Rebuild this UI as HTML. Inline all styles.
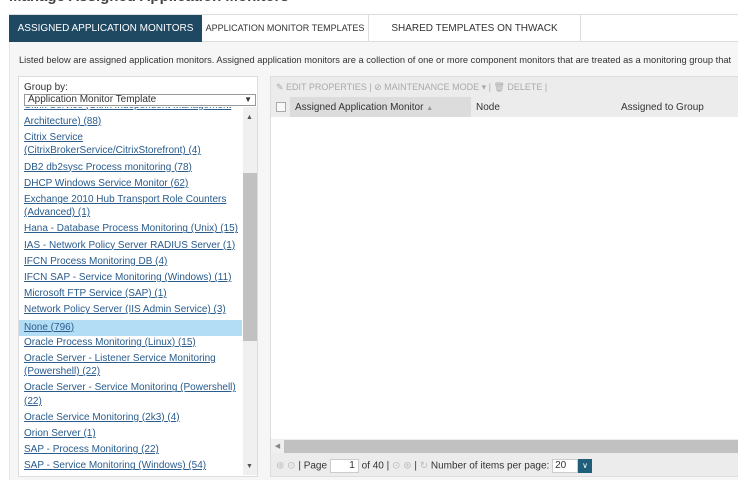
<!DOCTYPE html>
<html><head><style>
*{margin:0;padding:0;box-sizing:border-box}
body{width:738px;height:487px;overflow:hidden;background:#fff;font-family:"Liberation Sans",sans-serif;position:relative;color:#333}
.a{position:absolute}
.title{left:9px;top:-12px;font-size:15px;font-weight:bold;color:#444}
.tabs{left:9px;top:14px;width:729px;height:28px;border-top:1px solid #ddd;border-bottom:1px solid #ddd;background:#fff}
.tab{position:absolute;top:0;height:27px;line-height:27px;font-size:10px;color:#333;text-align:center;white-space:nowrap}
.content{left:9px;top:42px;width:729px;height:438px;background:#f6f6f6;border-left:1px solid #e6e6e6}
.list{left:18px;top:76px;width:240px;height:401px;background:#fff;border:1px solid #ddd}
.item{font-size:10px;line-height:13.2px;padding:0 0 3px 5px;color:#2a5c8c;white-space:nowrap}
.item span{text-decoration:underline}
.grid{left:270px;top:76px;width:468px;height:401px;background:#ececec;border:1px solid #ddd;border-right:none}
.tb{font-size:9px;color:#aaa}
</style></head><body>
<div class="a title">Manage Assigned Application Monitors</div>
<div class="a tabs">
<div class="tab" style="left:0;width:193px;background:#1f4862;color:#fff">ASSIGNED APPLICATION MONITORS</div>
<div class="tab" style="left:193px;width:167px;border-right:1px solid #ddd;font-size:9px">APPLICATION MONITOR TEMPLATES</div>
<div class="tab" style="left:360px;width:212px;border-right:1px solid #ddd">SHARED TEMPLATES ON THWACK</div>
</div>
<div class="a content"></div>
<div class="a" style="left:19px;top:55px;font-size:9.3px;white-space:nowrap;color:#333">Listed below are assigned application monitors. Assigned application monitors are a collection of one or more component monitors that are treated as a monitoring group that</div>
<div class="a list">
<div class="a" style="left:5px;top:5px;font-size:10px">Group by:</div>
<div class="a" style="left:5px;top:17px;width:232px;height:12px;border:1px solid #999;font-size:10px;line-height:10px;padding-left:3px;background:#fff">Application Monitor Template<span style="position:absolute;right:3px;font-size:8px">▼</span></div>
<div class="a" style="left:0;top:30px;width:223px;height:368px;overflow:hidden">
<div style="margin-top:-8px">
<div class="item"><span>Citrix Service (Citrix Independent Management</span></div>
</div>
<div style="position:absolute;top:8px;left:0;width:223px">
<div class="item"><span>Architecture) (88)</span></div>
<div class="item"><span>Citrix Service<br>(CitrixBrokerService/CitrixStorefront) (4)</span></div>
<div class="item"><span>DB2 db2sysc Process monitoring (78)</span></div>
<div class="item"><span>DHCP Windows Service Monitor (62)</span></div>
<div class="item"><span>Exchange 2010 Hub Transport Role Counters<br>(Advanced) (1)</span></div>
<div class="item"><span>Hana - Database Process Monitoring (Unix) (15)</span></div>
<div class="item"><span>IAS - Network Policy Server RADIUS Server (1)</span></div>
<div class="item"><span>IFCN Process Monitoring DB (4)</span></div>
<div class="item"><span>IFCN SAP - Service Monitoring (Windows) (11)</span></div>
<div class="item"><span>Microsoft FTP Service (SAP) (1)</span></div>
<div class="item"><span>Network Policy Server (IIS Admin Service) (3)</span></div>
<div class="item" style="background:#b3dcf5;padding-top:1px;padding-bottom:2px"><span>None (796)</span></div>
<div class="item"><span>Oracle Process Monitoring (Linux) (15)</span></div>
<div class="item"><span>Oracle Server - Listener Service Monitoring<br>(Powershell) (22)</span></div>
<div class="item"><span>Oracle Server - Service Monitoring (Powershell)<br>(22)</span></div>
<div class="item"><span>Oracle Service Monitoring (2k3) (4)</span></div>
<div class="item"><span>Orion Server (1)</span></div>
<div class="item"><span>SAP - Process Monitoring (22)</span></div>
<div class="item"><span>SAP - Service Monitoring (Windows) (54)</span></div>
</div>
</div>
<div class="a" style="left:224px;top:30px;width:14px;height:368px;background:#f0f0f0"></div>
<div class="a" style="left:224px;top:96px;width:14px;height:168px;background:#c1c1c1"></div>
<div class="a" style="left:227px;top:37px;font-size:7px;color:#555">▲</div>
<div class="a" style="left:227px;top:386px;font-size:7px;color:#555">▼</div>
</div>
<div class="a grid">
<div class="a tb" style="left:5px;top:5px;white-space:nowrap">✎ EDIT PROPERTIES | ⊘ MAINTENANCE MODE ▾ | 🗑 DELETE |</div>
<div class="a" style="left:5px;top:25px;width:10px;height:10px;border:1px solid #aaa;background:#f8f8f8"></div>
<div class="a" style="left:19px;top:20px;width:181px;height:20px;background:#dcdcdc"></div>
<div class="a" style="left:24px;top:25px;font-size:10px">Assigned Application Monitor <span style="color:#999;font-size:7px">▲</span></div>
<div class="a" style="left:205px;top:25px;font-size:10px">Node</div>
<div class="a" style="left:350px;top:25px;font-size:10px">Assigned to Group</div>
<div class="a" style="left:0;top:40px;width:468px;height:322px;background:#fff"></div>
<div class="a" style="left:0;top:363px;width:468px;height:13px;background:#c1c1c1"></div>
<div class="a" style="left:0;top:363px;width:13px;height:13px;background:#f0f0f0;font-size:7px;color:#888;line-height:13px;text-align:center">◀</div>
<div class="a" style="left:5px;top:382px;font-size:10px;white-space:nowrap;color:#333"><span style="color:#bbb">⊛ ⊙</span> | Page <span style="display:inline-block;width:29px;height:14px;border:1px solid #ccc;background:#fff;text-align:right;padding-right:3px;vertical-align:middle">1</span> of 40 | <span style="color:#bbb">⊙ ⊛</span> | <span style="color:#bbb">↻</span> Number of items per page: <span style="display:inline-block;width:26px;height:14px;border:1px solid #ccc;background:#fff;padding-left:2px;vertical-align:middle">20</span><span style="display:inline-block;width:14px;height:14px;background:#1f5f7a;color:#fff;font-size:8px;text-align:center;vertical-align:middle;line-height:14px">∨</span></div>
</div>
</body></html>
